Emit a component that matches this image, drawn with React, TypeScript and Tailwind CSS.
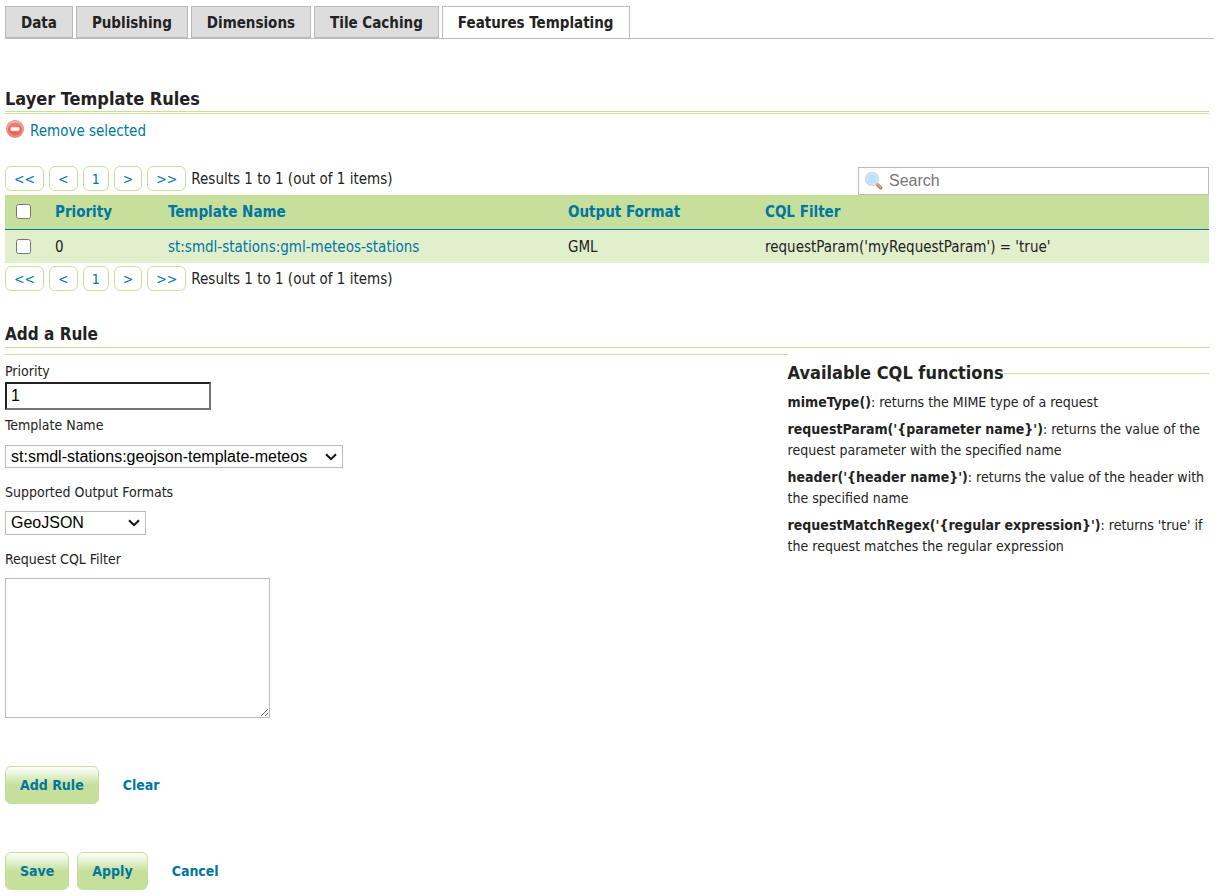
import React, { useState } from "react";

const tabs = ["Data", "Publishing", "Dimensions", "Tile Caching", "Features Templating"];

const functions = [
  { name: "mimeType()", text: "returns the MIME type of a request" },
  { name: "requestParam('{parameter name}')", text: "returns the value of the request parameter with the specified name" },
  { name: "header('{header name}')", text: "returns the value of the header with the specified name" },
  { name: "requestMatchRegex('{regular expression}')", text: "returns 'true' if the request matches the regular expression" },
];

function RemoveIcon() {
  return (
    <svg width="20" height="20" viewBox="0 0 20 20" aria-hidden="true" className="shrink-0">
      <defs>
        <linearGradient id="removeRing" x1="0" y1="0" x2="0" y2="1">
          <stop offset="0" stopColor="#f3b3aa" />
          <stop offset="1" stopColor="#ee8a7d" />
        </linearGradient>
        <linearGradient id="removeFill" x1="0" y1="0" x2="0" y2="1">
          <stop offset="0" stopColor="#ee9489" />
          <stop offset="0.5" stopColor="#e55a4e" />
          <stop offset="1" stopColor="#f26b5e" />
        </linearGradient>
      </defs>
      <circle cx="10" cy="10" r="9" fill="#d98c84" />
      <circle cx="10" cy="10" r="8.300" fill="url(#removeRing)" />
      <circle cx="10" cy="10" r="6.800" fill="url(#removeFill)" />
      <rect x="5.500" y="8" width="9" height="4" rx="1.200" fill="#fff" stroke="#f4a299" strokeWidth="0.8" />
    </svg>
  );
}

function SearchIcon() {
  return (
    <svg width="18" height="18" viewBox="0 0 18 18" aria-hidden="true" className="shrink-0">
      <path d="M12 12.200l3.700 3.600" stroke="#b98252" strokeWidth="3.400" strokeLinecap="round" />
      <path d="M12.500 12l3.300 3.200" stroke="#dfb083" strokeWidth="1.300" strokeLinecap="round" />
      <circle cx="7" cy="7" r="6.200" fill="#c4dffa" stroke="#c3d9f3" strokeWidth="1.600" />
      <circle cx="7" cy="7" r="5" fill="#bfdffb" stroke="#dcebfc" strokeWidth="0.900" />
    </svg>
  );
}

function Pager() {
  return (
    <nav className="flex items-start gap-[5px] text-sm">
      {["<<", "<", "1", ">", ">>"].map((label) => (
        <a
          key={label}
          href="#"
          className="h-[25px] rounded-md border border-[#c6e09b] px-2 text-center leading-[25px] text-[#0076a1]"
        >
          {label}
        </a>
      ))}
      <span className="pt-px text-[15px] leading-[25px]">Results 1 to 1 (out of 1 items)</span>
    </nav>
  );
}

function GreenButton({ children }: { children: React.ReactNode }) {
  return (
    <button
      type="button"
      className="h-[38px] rounded-md border border-[#c6e09b] bg-linear-to-b from-white to-[#c6e09b] to-50% px-[14px] text-sm font-bold text-[#0076a1]"
    >
      {children}
    </button>
  );
}

function Dropdown({ id, option, box }: { id: string; option: string; box: string }) {
  return (
    <div className={box}>
      <select
        id={id}
        className="size-full appearance-none border border-[#bbb] bg-white pl-[5px] font-['Liberation_Sans',Arial,sans-serif] text-base leading-[20px] text-black"
      >
        <option>{option}</option>
      </select>
      <svg
        width="12"
        height="8"
        viewBox="0 0 12 8"
        aria-hidden="true"
        className="pointer-events-none absolute top-2 right-[6px]"
      >
        <path d="M1 1.200L6 6.200L11 1.200" fill="none" stroke="#111" strokeWidth="2" />
      </svg>
    </div>
  );
}

export default function App() {
  const [priority, setPriority] = useState("1");
  return (
    <main className="px-[5px] pt-[6px] pb-[6px] font-['DejaVu_Sans_Condensed','DejaVu_Sans',sans-serif] text-sm text-[#222]">
      <nav className="flex gap-[3px] border-b border-[#bbb]">
        {tabs.map((tab, i) => (
          <a
            key={tab}
            href="#"
            className={
              i === tabs.length - 1
                ? "h-[32px] border border-b-0 border-[#bbb] bg-white px-[15px] text-[15px] leading-[32px] font-bold"
                : "h-[32px] border border-[#bbb] bg-[#ddd] px-[15px] text-[15px] leading-[32px] font-bold"
            }
          >
            {tab}
          </a>
        ))}
      </nav>

      <div className="mt-[48px] pr-[5px]">
        <h2 className="h-[27px] border-b-3 border-double border-[#c6e09b] text-lg leading-[24px] font-bold">
          Layer Template Rules
        </h2>
        <a href="#" className="mt-[5px] flex items-start gap-[5px] text-[15px] leading-[24px] text-[#0076a1]">
          <RemoveIcon />
          Remove selected
        </a>

        <div className="mt-[23px] flex items-start justify-between">
          <Pager />
          <label className="mt-px flex h-[28px] w-[351px] items-center gap-[6px] border border-[#bbb] bg-white pl-[6px]">
            <SearchIcon />
            <input
              type="text"
              aria-label="Search"
              placeholder="Search"
              className="min-w-0 flex-1 font-['Liberation_Sans',Arial,sans-serif] text-base outline-none placeholder:text-[#757575]"
            />
          </label>
        </div>

        <table className="w-full table-fixed text-left text-[15px]">
          <colgroup>
            <col className="w-[39px]" />
            <col className="w-[113px]" />
            <col className="w-[400px]" />
            <col className="w-[197px]" />
            <col />
          </colgroup>
          <thead>
            <tr className="h-[34px] border-b border-[#0076a1] bg-[#c6e09b] text-[#0076a1]">
              <th className="pl-[11px]">
                <input type="checkbox" aria-label="Select all rules" className="block size-[15px]" />
              </th>
              <th className="pt-[2px] pl-[11px]">Priority</th>
              <th className="pt-[2px] pl-[11px]">Template Name</th>
              <th className="pt-[2px] pl-[11px]">Output Format</th>
              <th className="pt-[2px] pl-[11px]">CQL Filter</th>
            </tr>
          </thead>
          <tbody>
            <tr className="h-[34px] bg-[#e1efcc]">
              <td className="pl-[11px]">
                <input type="checkbox" aria-label="Select rule" className="block size-[15px]" />
              </td>
              <td className="pt-[2px] pl-[11px]">0</td>
              <td className="pt-[2px] pl-[11px]">
                <a href="#" className="text-[#0076a1]">st:smdl-stations:gml-meteos-stations</a>
              </td>
              <td className="pt-[2px] pl-[11px]">GML</td>
              <td className="pt-[2px] pl-[11px]">requestParam('myRequestParam') = 'true'</td>
            </tr>
          </tbody>
        </table>
        <div className="mt-[3px]">
          <Pager />
        </div>

        <h3 className="mt-[30px] border-b border-[#c6e09b] pb-px text-[17px] leading-[24px] font-bold">Add a Rule</h3>

        <form className="mt-[6px]" onSubmit={(e) => e.preventDefault()}>
          <div className="flex items-start">
            <div className="flex w-[65%] flex-col items-start border-t border-[#c6e09b] pt-[6px]">
              <label htmlFor="priority" className="leading-[21px]">Priority</label>
              <input
                id="priority"
                type="text"
                value={priority}
                onChange={(e) => setPriority(e.target.value)}
                className="h-[28px] w-[206px] border-2 border-t-[#222] border-r-[#767676] border-b-[#767676] border-l-[#222] px-1 font-['Liberation_Sans',Arial,sans-serif] text-base text-black"
              />
              <label htmlFor="template" className="mt-[5px] leading-[21px]">Template Name</label>
              <Dropdown
                id="template"
                option="st:smdl-stations:geojson-template-meteos"
                box="relative mt-[9px] h-[23px] w-[338px]"
              />
              <label htmlFor="format" className="mt-[14px] leading-[21px]">Supported Output Formats</label>
              <Dropdown id="format" option="GeoJSON" box="relative mt-[8px] h-[24px] w-[141px]" />
              <label htmlFor="filter" className="mt-[14px] leading-[21px]">Request CQL Filter</label>
              <textarea id="filter" className="mt-[8px] h-[140px] w-[265px] resize border border-[#bbb] bg-white" />
            </div>
            <fieldset className="mt-[7px] w-[35%] border-t border-[#c6e09b]">
              <legend className="text-lg leading-[24px] font-bold">Available CQL functions</legend>
              <ul className="flex flex-col gap-[6px] pt-[7px] leading-[21px]">
                {functions.map((f) => (
                  <li key={f.name}>
                    <b>{f.name}</b>: {f.text}
                  </li>
                ))}
              </ul>
            </fieldset>
          </div>

          <div className="mt-[48px] flex items-center gap-6">
            <GreenButton>Add Rule</GreenButton>
            <a href="#" className="font-bold text-[#0076a1]">Clear</a>
          </div>
        </form>

        <div className="mt-[48px] flex items-center gap-2">
          <GreenButton>Save</GreenButton>
          <GreenButton>Apply</GreenButton>
          <a href="#" className="ml-4 font-bold text-[#0076a1]">Cancel</a>
        </div>
      </div>
    </main>
  );
}
